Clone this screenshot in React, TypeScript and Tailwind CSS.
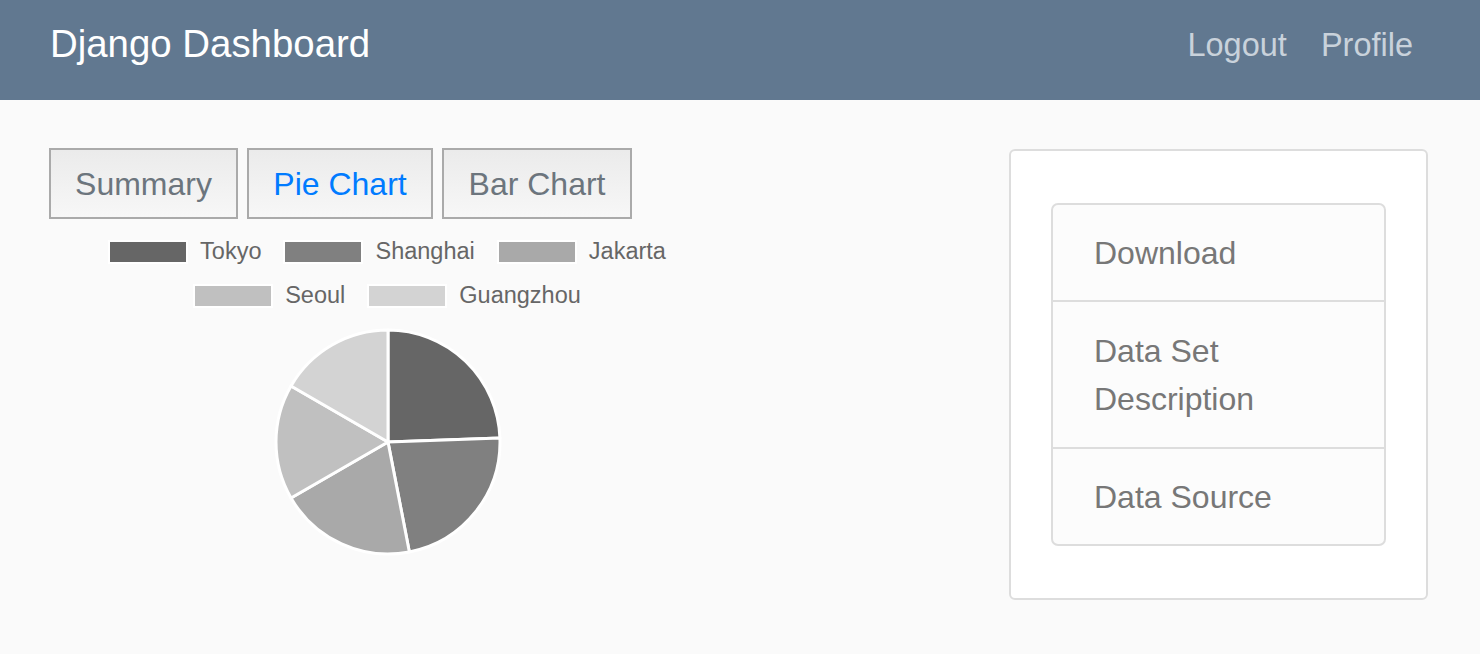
import React from "react";

const FONT = { fontFamily: '"Liberation Sans", Arial, Helvetica, sans-serif' };

type Slice = { label: string; color: string; from: number; to: number };

const SLICES: Slice[] = [
  { label: "Tokyo", color: "#666666", from: -90, to: -2 },
  { label: "Shanghai", color: "#808080", from: -2, to: 79 },
  { label: "Jakarta", color: "#a9a9a9", from: 79, to: 150 },
  { label: "Seoul", color: "#c0c0c0", from: 150, to: 210 },
  { label: "Guangzhou", color: "#d3d3d3", from: 210, to: 270 },
];

function point(cx: number, cy: number, r: number, deg: number) {
  const rad = (deg * Math.PI) / 180;
  return `${(cx + r * Math.cos(rad)).toFixed(2)} ${(cy + r * Math.sin(rad)).toFixed(2)}`;
}

function PieChart() {
  const cx = 120;
  const cy = 120;
  const r = 112;
  return (
    <svg width="240" height="240" viewBox="0 0 240 240">
      {SLICES.map((s) => (
        <path
          key={s.label}
          d={`M ${cx} ${cy} L ${point(cx, cy, r, s.from)} A ${r} ${r} 0 0 1 ${point(cx, cy, r, s.to)} Z`}
          fill={s.color}
          stroke="#ffffff"
          strokeWidth={3}
          strokeLinejoin="round"
        />
      ))}
    </svg>
  );
}

function LegendItem({ slice }: { slice: Slice }) {
  return (
    <div className="flex items-center gap-[12px]">
      <span className="block h-[24px] w-[80px] border-[2px] border-white" style={{ backgroundColor: slice.color }} />
      <span className="text-[23.5px] leading-none text-[#666]">{slice.label}</span>
    </div>
  );
}

function TabButton({ label, active, width }: { label: string; active?: boolean; width: string }) {
  return (
    <button
      type="button"
      className={`${width} h-[71px] border-[2px] border-[#aaaaaa] bg-gradient-to-b from-[#ebebeb] to-[#f7f7f7] text-[32px] leading-none ${
        active ? "text-[#007bff]" : "text-[#6c757d]"
      }`}
    >
      {label}
    </button>
  );
}

export default function App() {
  return (
    <div className="min-h-[654px] bg-[#fafafa]" style={FONT}>
      <header className="flex h-[100px] items-start justify-between bg-[#617890] pl-[50px] pr-[67px]">
        <span className="mt-[25px] text-[38.4px] leading-none text-white">Django Dashboard</span>
        <nav className="mt-[29px] flex gap-[34px] text-[32.5px] leading-none text-[#c9d2db]">
          <a>Logout</a>
          <a>Profile</a>
        </nav>
      </header>

      <main className="flex justify-between pl-[49px] pr-[52px] pt-[48px]">
        <section className="w-[676px]">
          <div className="flex gap-[9px]">
            <TabButton label="Summary" width="w-[189px]" />
            <TabButton label="Pie Chart" width="w-[186px]" active />
            <TabButton label="Bar Chart" width="w-[190px]" />
          </div>

          <div className="mt-[21px] flex flex-col items-center gap-[20px]">
            <div className="flex gap-[22px]">
              <LegendItem slice={SLICES[0]} />
              <LegendItem slice={SLICES[1]} />
              <LegendItem slice={SLICES[2]} />
            </div>
            <div className="flex gap-[22px]">
              <LegendItem slice={SLICES[3]} />
              <LegendItem slice={SLICES[4]} />
            </div>
          </div>

          <div className="mt-[14px] flex justify-center pl-[1px]">
            <PieChart />
          </div>
        </section>

        <aside className="mt-[1px] h-[451px] w-[419px] rounded-[6px] border-[2px] border-[#dddddd] bg-white px-[40px] pt-[52px]">
          <ul className="overflow-hidden rounded-[7px] border-[2px] border-[#dddddd] bg-[#fcfcfc] text-[32px] leading-[48px] text-[#777777]">
            <li className="py-[23.5px] pl-[41px]">Download</li>
            <li className="border-t-[2px] border-[#dddddd] py-[24.5px] pl-[41px] pr-[80px]">Data Set Description</li>
            <li className="border-t-[2px] border-[#dddddd] py-[23.5px] pl-[41px]">Data Source</li>
          </ul>
        </aside>
      </main>
    </div>
  );
}
